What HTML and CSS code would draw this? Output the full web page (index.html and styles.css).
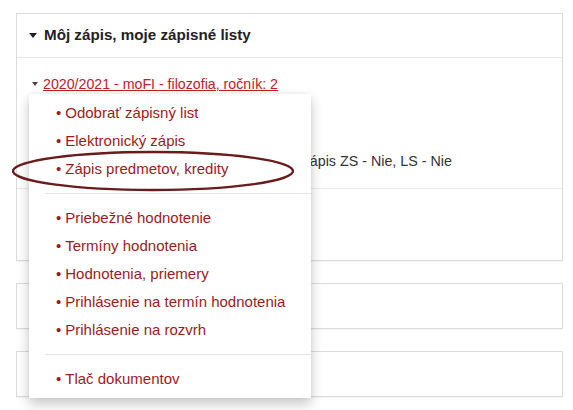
FILE: index.html
```html
<!DOCTYPE html>
<html lang="sk">
<head>
<meta charset="utf-8">
<link rel="stylesheet" href="styles.css">
</head>
<body>
<div class="page">
  <section class="panel panel-main">
    <header class="panel-head">
      <span class="caret caret-lg"></span>
      <h2>Môj zápis, moje zápisné listy</h2>
    </header>
    <div class="panel-section first">
      <div class="link-row">
        <span class="caret caret-sm"></span>
        <a href="#" class="study-link">2020/2021 - moFI - filozofia, ročník: 2</a>
      </div>
      <div class="info-row">
        <span class="info-value">Zápis ZS - Nie, LS - Nie</span>
      </div>
    </div>
    <div class="panel-section second"></div>
  </section>
  <section class="panel panel-small"></section>
  <section class="panel panel-small"></section>

  <ul class="dropdown">
    <li><a href="#">Odobrať zápisný list</a></li>
    <li><a href="#">Elektronický zápis</a></li>
    <li><a href="#">Zápis predmetov, kredity</a></li>
    <li class="divider"></li>
    <li><a href="#">Priebežné hodnotenie</a></li>
    <li><a href="#">Termíny hodnotenia</a></li>
    <li><a href="#">Hodnotenia, priemery</a></li>
    <li><a href="#">Prihlásenie na termín hodnotenia</a></li>
    <li><a href="#">Prihlásenie na rozvrh</a></li>
    <li class="divider"></li>
    <li><a href="#">Tlač dokumentov</a></li>
  </ul>

  <svg class="annotation" width="290" height="44" viewBox="0 0 290 44">
    <ellipse cx="141" cy="21" rx="140" ry="19" fill="none" stroke="#6a1c1c" stroke-width="2.4"/>
  </svg>
</div>
</body>
</html>
```

FILE: styles.css
```css
* { box-sizing: border-box; }
html, body {
  margin: 0;
  padding: 0;
  background: #fff;
}
body {
  font-family: "Liberation Sans", Arial, sans-serif;
  font-size: 14px;
  color: #333;
  width: 573px;
  height: 410px;
  overflow: hidden;
}
.page {
  position: relative;
  padding: 13px 10px 0 16px;
  display: flex;
  flex-direction: column;
  gap: 22px;
}
.panel {
  border: 1px solid #dcdcdc;
  background: #fff;
  box-shadow: 0 1px 1px rgba(0,0,0,0.04);
}
.panel-head {
  height: 44px;
  border-bottom: 1px solid #e6e6e6;
  display: flex;
  align-items: center;
  padding-left: 12px;
  gap: 7px;
}
.panel-head h2 {
  margin: 0;
  font-size: 15.2px;
  font-weight: bold;
  color: #222;
  position: relative;
  top: -1px;
}
.caret {
  display: inline-block;
  width: 0;
  height: 0;
  border-left-style: solid;
  border-right-style: solid;
  border-top-style: solid;
  border-left-color: transparent;
  border-right-color: transparent;
  border-top-color: #222;
}
.caret-lg {
  border-left-width: 4px;
  border-right-width: 4px;
  border-top-width: 5px;
}
.caret-sm {
  border-left-width: 3px;
  border-right-width: 3px;
  border-top-width: 4px;
  border-top-color: #444;
}
.panel-section.first {
  height: 131px;
  border-bottom: 1px solid #eaeaea;
  padding: 16px 0 0 15px;
}
.panel-section.second {
  height: 71px;
}
.link-row {
  display: flex;
  align-items: center;
  gap: 5px;
  height: 20px;
}
.study-link {
  font-size: 14.2px;
  color: #c0202a;
  text-decoration: underline;
}
.info-row {
  margin-top: 57px;
  height: 20px;
  display: flex;
  align-items: center;
  padding-left: 269px;
}
.info-value { color: #333; font-size: 14.3px; }
.panel-small {
  height: 46px;
}
.dropdown {
  position: absolute;
  left: 29px;
  top: 94px;
  width: 282px;
  margin: 0;
  padding: 5px 0;
  list-style: none;
  background: #fff;
  box-shadow: 0 6px 12px rgba(0,0,0,0.22), 0 0 4px rgba(0,0,0,0.06);
  z-index: 5;
}
.dropdown li a {
  display: block;
  height: 28px;
  line-height: 28px;
  padding-left: 27px;
  font-size: 15px;
  color: #9a1c1c;
  text-decoration: none;
  white-space: nowrap;
}
.dropdown li a::before {
  content: "•";
  margin-right: 4px;
}
.dropdown .divider {
  height: 1px;
  background: #e5e5e5;
  margin: 10px 0 10px 16px;
}
.annotation {
  position: absolute;
  left: 12px;
  top: 150px;
  z-index: 6;
}
```
